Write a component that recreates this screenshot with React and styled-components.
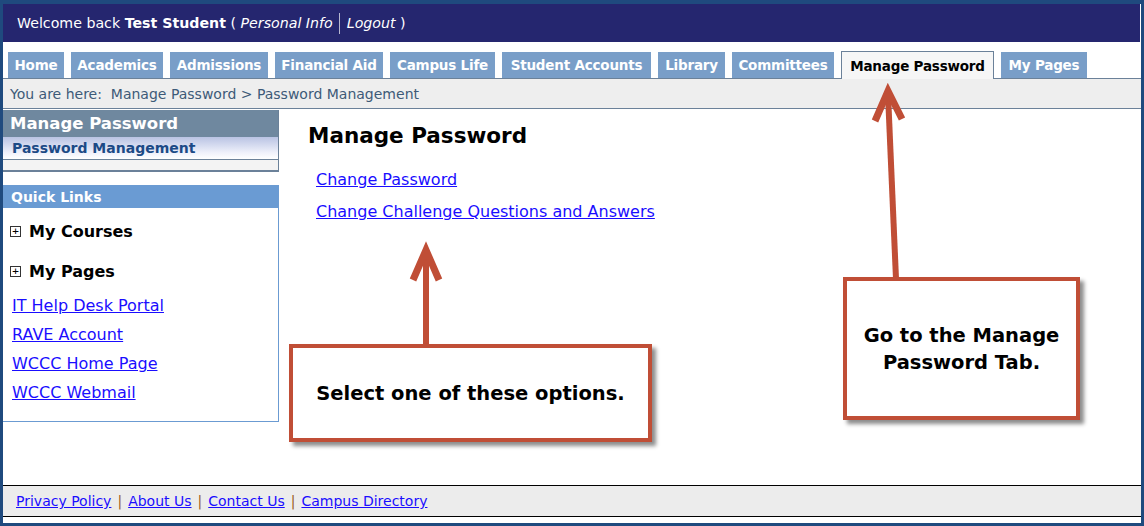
import React from 'react';
import styled, { createGlobalStyle } from 'styled-components';

const Global = createGlobalStyle`
  body {
    margin: 0;
    font-family: 'DejaVu Sans', Verdana, sans-serif;
    background: #fff;
  }
`;

const tabs = [
  { label: 'Home', w: 56 },
  { label: 'Academics', w: 92 },
  { label: 'Admissions', w: 98 },
  { label: 'Financial Aid', w: 108 },
  { label: 'Campus Life', w: 105 },
  { label: 'Student Accounts', w: 149 },
  { label: 'Library', w: 67 },
  { label: 'Committees', w: 102 },
  { label: 'Manage Password', w: 153, active: true },
  { label: 'My Pages', w: 86 },
];

const quickLinks = ['IT Help Desk Portal', 'RAVE Account', 'WCCC Home Page', 'WCCC Webmail'];
const footerLinks = ['Privacy Policy', 'About Us', 'Contact Us', 'Campus Directory'];

const App = () => {
  return (
    <>
      <Global />
      <Frame>
        <TopBar>
          Welcome back&nbsp;<b>Test Student</b>&nbsp;(&nbsp;<i>Personal Info</i>
          <Divider />
          <i>Logout</i>&nbsp;)
        </TopBar>

        <TabRow>
          {tabs.map((t) => (
            <Tab key={t.label} $w={t.w} $active={t.active}>
              {t.label}
            </Tab>
          ))}
        </TabRow>

        <Crumbs>You are here:&nbsp; Manage Password &gt; Password Management</Crumbs>

        <Body>
          <Sidebar>
            <NavBox>
              <NavHead>Manage Password</NavHead>
              <NavItem>Password Management</NavItem>
              <NavFoot />
            </NavBox>

            <LinksBox>
              <LinksHead>Quick Links</LinksHead>
              <LinksBody>
                <Expander>
                  <PlusBox>+</PlusBox>My Courses
                </Expander>
                <Expander>
                  <PlusBox>+</PlusBox>My Pages
                </Expander>
                {quickLinks.map((l) => (
                  <SideLink key={l} href="#">
                    {l}
                  </SideLink>
                ))}
              </LinksBody>
            </LinksBox>
          </Sidebar>

          <Main>
            <Heading>Manage Password</Heading>
            <MainLink href="#">Change Password</MainLink>
            <MainLink href="#">Change Challenge Questions and Answers</MainLink>
          </Main>
        </Body>

        <Footer>
          {footerLinks.map((l, i) => (
            <React.Fragment key={l}>
              {i > 0 && <Sep>|</Sep>}
              <FootLink href="#">{l}</FootLink>
            </React.Fragment>
          ))}
        </Footer>

        {/* annotations drawn over the screenshot */}
        <Arrows width="1144" height="526" viewBox="0 0 1144 526">
          <g stroke="#c04e36" strokeWidth="6" fill="none">
            <line x1="426" y1="346" x2="426" y2="252" />
            <polyline points="413,280 426,250 439,280" strokeWidth="7" />
            <line x1="896" y1="279" x2="888" y2="94" />
            <polyline points="875,121 888,91 902,119" strokeWidth="7" />
          </g>
        </Arrows>
        <Callout $x={289} $y={344} $w={363} $h={98}>
          Select one of these options.
        </Callout>
        <Callout $x={843} $y={277} $w={237} $h={143} $pad={41}>
          Go to the Manage
          <br />
          Password Tab.
        </Callout>
      </Frame>
    </>
  );
};
export default App;

const Frame = styled.div`
  position: relative;
  width: 1144px;
  height: 526px;
  box-sizing: border-box;
  border: 3px solid #1f4a7e;
  border-top-width: 4px;
  background: #fff;
  display: flex;
  flex-direction: column;
  overflow: hidden;
`;

const TopBar = styled.div`
  height: 38px;
  background: #25266f;
  color: #fff;
  font-size: 14.2px;
  display: flex;
  align-items: center;
  padding-left: 14px;
  margin-right: 1px;
  white-space: pre;
`;

const Divider = styled.span`
  display: inline-block;
  width: 1px;
  height: 21px;
  background: #b8b8d0;
  margin: 0 7px 0 6px;
`;

const TabRow = styled.div`
  display: flex;
  align-items: flex-end;
  gap: 7px;
  height: 27px;
  margin-top: 9px;
  padding-left: 5px;
  position: relative;
  z-index: 1;
`;

const Tab = styled.div`
  width: ${(p) => p.$w}px;
  flex: none;
  box-sizing: border-box;
  height: ${(p) => (p.$active ? 28 : 26)}px;
  margin-bottom: ${(p) => (p.$active ? -1 : 0)}px;
  background: ${(p) => (p.$active ? '#f6f6f6' : '#799ec8')};
  border: ${(p) => (p.$active ? '1px solid #6b8199' : 'none')};
  border-bottom: none;
  color: ${(p) => (p.$active ? '#000' : '#fff')};
  font-weight: bold;
  font-size: 13.5px;
  letter-spacing: -0.2px;
  display: flex;
  align-items: center;
  justify-content: center;
  white-space: nowrap;
`;

const Crumbs = styled.div`
  height: 31px;
  box-sizing: border-box;
  background: #eeeeee;
  border-top: 1px solid #6b8199;
  border-bottom: 1px solid #6b8199;
  color: #3d5a78;
  font-size: 14px;
  padding-left: 7px;
  display: flex;
  align-items: center;
`;

const Body = styled.div`
  display: flex;
  flex: 1;
  padding-top: 1px;
`;

const Sidebar = styled.div`
  width: 276px;
  flex: none;
`;

const NavBox = styled.div`
  border-right: 1px solid #6b8199;
  border-bottom: 2px solid #6b8199;
`;

const NavHead = styled.div`
  height: 27px;
  background: #6f889f;
  color: #fff;
  font-weight: bold;
  font-size: 16.5px;
  padding-left: 7px;
  display: flex;
  align-items: center;
`;

const NavItem = styled.div`
  height: 23px;
  box-sizing: border-box;
  background: linear-gradient(#b9c3e3, #eef0fa 70%, #ffffff);
  border-bottom: 1px solid #6b8199;
  color: #1c4a86;
  font-weight: bold;
  font-size: 14px;
  padding-left: 9px;
  display: flex;
  align-items: center;
`;

const NavFoot = styled.div`
  height: 10px;
  background: #f3f3f3;
`;

const LinksBox = styled.div`
  margin-top: 13px;
  height: 237px;
  box-sizing: border-box;
  border: 1px solid #6b9bd2;
  border-left: none;
`;

const LinksHead = styled.div`
  height: 22px;
  background: #6a9bd3;
  color: #fff;
  font-weight: bold;
  font-size: 14px;
  padding-left: 8px;
  display: flex;
  align-items: center;
`;

const LinksBody = styled.div`
  display: flex;
  flex-direction: column;
  padding: 13px 0 0 7px;
`;

const Expander = styled.div`
  display: flex;
  align-items: center;
  height: 20px;
  margin-bottom: 20px;
  font-weight: bold;
  font-size: 16px;
  color: #000;
`;

const PlusBox = styled.span`
  width: 9px;
  height: 9px;
  border: 1px solid #333;
  box-sizing: content-box;
  font-size: 11px;
  line-height: 9px;
  text-align: center;
  font-weight: normal;
  margin-right: 8px;
  font-family: 'DejaVu Sans Mono', monospace;
`;

const SideLink = styled.a`
  color: #1a0dff;
  font-size: 16px;
  line-height: 29px;
  margin-top: -6px;
  margin-bottom: 6px;
  margin-left: 2px;
  align-self: flex-start;
  text-decoration: underline;
  &:first-of-type {
    margin-top: -10px;
  }
`;

const Main = styled.div`
  flex: 1;
  padding: 13px 0 0 27px;
  display: flex;
  flex-direction: column;
  align-items: flex-start;
`;

const Heading = styled.h1`
  font-size: 21.5px;
  font-weight: bold;
  margin: 0 0 24px 2px;
  color: #000;
`;

const MainLink = styled.a`
  color: #1a0dff;
  font-size: 16px;
  line-height: 32px;
  margin-left: 10px;
  margin-top: -8px;
  margin-bottom: 8px;
`;

const Footer = styled.div`
  height: 32px;
  box-sizing: border-box;
  background: #ececec;
  border-top: 1px solid #000;
  border-bottom: 1px solid #000;
  margin-bottom: 6px;
  padding-left: 13px;
  display: flex;
  align-items: center;
  font-size: 14px;
`;

const FootLink = styled.a`
  color: #1a0dff;
`;

const Sep = styled.span`
  color: #9a5e1e;
  margin: 0 6px;
`;

const Arrows = styled.svg`
  position: absolute;
  left: -3px;
  top: -4px;
  pointer-events: none;
`;

const Callout = styled.div`
  position: absolute;
  left: ${(p) => p.$x - 3}px;
  top: ${(p) => p.$y - 4}px;
  width: ${(p) => p.$w}px;
  height: ${(p) => p.$h}px;
  box-sizing: border-box;
  background: #fff;
  border: 4px solid #c04e36;
  box-shadow: 4px 4px 4px rgba(0, 0, 0, 0.45);
  font-family: 'DejaVu Sans', Arial, sans-serif;
  font-weight: bold;
  font-size: 19.5px;
  line-height: 27px;
  color: #000;
  text-align: center;
  padding-top: ${(p) => p.$pad || 32}px;
`;
